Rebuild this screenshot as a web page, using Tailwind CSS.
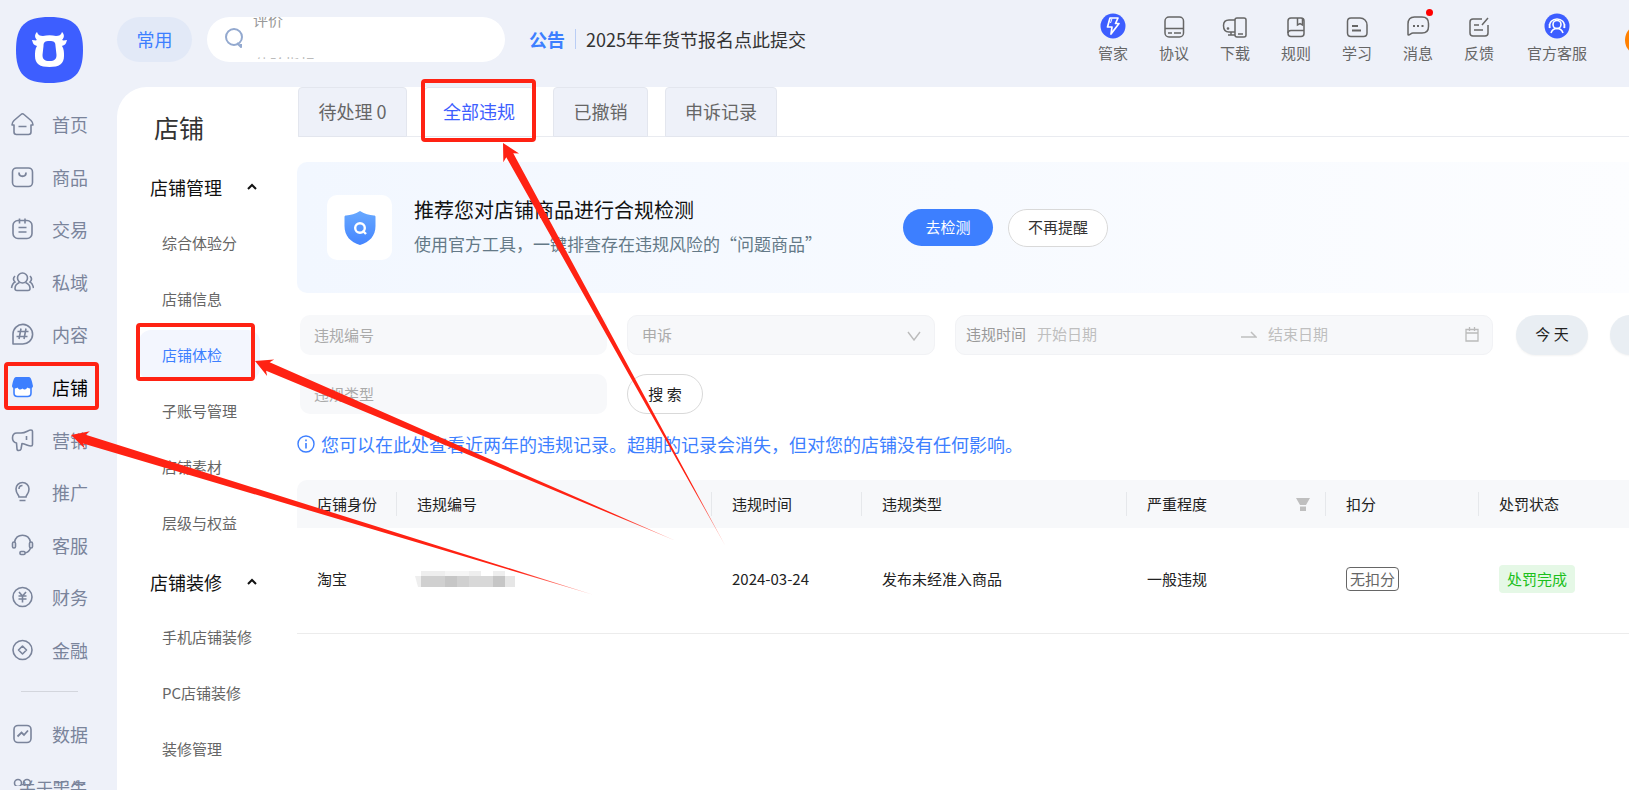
<!DOCTYPE html>
<html lang="zh-CN">
<head>
<meta charset="utf-8">
<meta name="viewport" content="width=device-width, initial-scale=1">
<title>店铺体检</title>
<script src="https://cdn.jsdelivr.net/npm/@tailwindcss/browser@4"></script>
</head>
<body class="relative flex h-screen flex-col overflow-hidden bg-[#eef1f9] font-['Noto_Sans_CJK_SC',sans-serif] text-[15px] leading-6 text-[#222]">

<header class="flex h-[87px] shrink-0 items-start overflow-hidden">
  <a href="#" aria-label="首页" class="ml-4 mt-[17px] shrink-0">
    <svg width="67" height="66" viewBox="0 0 67 66"><path d="M33.500 0C58 0 67 9 67 33S58 66 33.500 66 0 57 0 33 9 0 33.500 0Z" fill="#3d5eff"/><path fill="#fff" fill-rule="evenodd" d="M21 15c-3 3-2 6 0 8-2 1-3 0-5 0 1 4 2 5 5 6-2 3-2 6-2 10 0 8 5 11 14.500 11S48 47 48 39c0-4 0-7-2-10 3-1 4-2 5-6-2 0-3 1-5 0 2-2 3-5 0-8-1 3-3 4-6 4-4-1-9-1-13 0-3 0-5-1-6-4ZM33.500 24c4.500 0 6 1 6 5l1 9c0 4-2 6-7 6s-7-2-7-6l1-9c0-4 1.500-5 6-5Z"/></svg>
  </a>
  <button class="ml-[34px] mt-[17px] h-[45px] w-[75px] shrink-0 rounded-full bg-[#e2e9f7] pb-0.5 text-lg text-[#3d7fff]">常用</button>
  <label class="relative ml-[15px] mt-[17px] flex h-[45px] w-[298px] shrink-0 items-center overflow-hidden rounded-full bg-white pl-[18px]">
    <svg class="-mt-1" width="20" height="22" viewBox="0 0 20 22" fill="none" stroke="#93a9cf" stroke-width="2"><circle cx="9" cy="10" r="8"/><path d="M12 16l4 4v-3" stroke-linejoin="round"/></svg>
    <input aria-label="搜索" class="absolute inset-0 rounded-full bg-transparent pl-12 outline-none">
    <span class="pointer-events-none absolute -top-[9px] left-[46px] text-[#999]">评价</span>
    <span class="pointer-events-none absolute left-[48px] top-[39px] h-[3px] overflow-hidden text-[#bbb]"><span class="block leading-4">体验指标</span></span>
  </label>
  <div class="ml-6 mt-[23px] flex shrink-0 items-center whitespace-nowrap text-lg leading-8">
    <b class="text-[#3d7fff]">公告</b>
    <span class="mx-[10px] h-5 w-px bg-[#b9cdf5]"></span>
    <a href="#" class="text-[#333]">2025年年货节报名点此提交</a>
  </div>
  <nav class="ml-auto mt-[13px] flex shrink-0 gap-[31px] text-[#666]" aria-label="工具">
    <a href="#" class="flex flex-col items-center gap-0.5"><svg width="26" height="26" viewBox="0 0 26 26"><circle cx="13" cy="13" r="12.500" fill="#3d5eff"/><path d="M10 5h8l-2.500 5.500H19L11 21l1-7H7.500Z" fill="none" stroke="#fff" stroke-width="1.700" stroke-linejoin="round"/><path d="M12 5.500 10.500 10" stroke="#fff"/></svg>管家</a>
    <a href="#" class="flex flex-col items-center gap-0.5"><svg width="26" height="26" viewBox="0 0 26 26" fill="none" stroke="#666" stroke-width="1.500"><rect x="4" y="4" width="18.500" height="20" rx="4"/><path d="M4 15.500h18.500M7 20h4M13 20h7"/></svg>协议</a>
    <a href="#" class="flex flex-col items-center gap-0.5"><svg width="26" height="26" viewBox="0 0 26 26" fill="none" stroke="#666" stroke-width="1.500"><rect x="13" y="5" width="11" height="19" rx="2"/><path d="M13 7H7C3 7 1.500 9 1.500 12.500S3 19 7 19h6M9 19v3M6 22h7M16 21h5"/><circle cx="6" cy="15.500" r=".6" fill="#666"/></svg>下载</a>
    <a href="#" class="flex flex-col items-center gap-0.5"><svg width="26" height="26" viewBox="0 0 26 26" fill="none" stroke="#666" stroke-width="1.500"><rect x="5" y="5" width="16" height="18.500" rx="3"/><path d="M5 20c0-2 1-2.500 3-2.500h13M14.500 5v7l2.500-1.500 2.500 1.500V5"/></svg>规则</a>
    <a href="#" class="flex flex-col items-center gap-0.5"><svg width="26" height="26" viewBox="0 0 26 26" fill="none" stroke="#666" stroke-width="1.500"><path d="M7 5h9c4 0 7 3 7 7v8c0 2.500-1 3.500-3.500 3.500H7C4.500 23.500 3.500 22.500 3.500 20V8.500C3.500 6 4.500 5 7 5Z"/><path d="M8 13h6M8 17.500h9" stroke-width="1.800"/></svg>学习</a>
    <a href="#" class="relative flex flex-col items-center gap-0.5"><svg width="26" height="26" viewBox="0 0 26 26" fill="none" stroke="#666" stroke-width="1.500"><path d="M3 21.500V11c0-4.500 2-7 6.500-7H17c4.500 0 6.500 2.500 6.500 6.500v3c0 4-2 6.500-6.500 6.500H8c-2 0-3 2-4.500 2-.4 0-.5-.2-.5-.5Z"/><path d="M8 13h2M12 13h2M16.500 13h2" stroke-width="2"/></svg>消息<i class="absolute right-0 -top-1 size-[7px] rounded-full bg-[#ff0000]"></i></a>
    <a href="#" class="flex flex-col items-center gap-0.5"><svg width="26" height="26" viewBox="0 0 26 26" fill="none" stroke="#666" stroke-width="1.500"><path d="M16 6H7C5 6 4 7 4 9v11c0 2 1 3 3 3h12c2 0 3-1 3-3v-8M8 12h5M8 17h9M16 12l6-7"/></svg>反馈</a>
    <a href="#" class="ml-0.5 flex flex-col items-center gap-0.5"><svg width="26" height="26" viewBox="0 0 26 26" fill="none" stroke="#fff" stroke-width="1.600"><circle cx="13" cy="13" r="12.500" fill="#3d5eff" stroke="none"/><circle cx="13" cy="11.500" r="4"/><path d="M7 20c1-3 3-4.500 6-4.500s5 1.500 6 4.500M6 15c-3-12 17-12 14 0M5.500 11v4M20.500 11v4"/></svg>官方客服</a>
  </nav>
  <button aria-label="账户" class="-mr-7 ml-[38px] mt-6 size-8 shrink-0 rounded-full bg-[#ff8000]"></button>
</header>

<div class="flex min-h-0 flex-1">
  <nav class="relative w-[117px] shrink-0 overflow-hidden pt-[11px] text-lg text-[#7a849b]" aria-label="主导航">
    <div class="grid h-[578px] auto-rows-fr [&>a]:flex [&>a]:items-center [&>a]:gap-[18px] [&>a]:pl-[10px] [&_svg]:size-6 [&_svg]:shrink-0">
      <a href="#"><svg viewBox="0 0 24 24" fill="none" stroke="currentColor" stroke-width="1.600" stroke-linejoin="round"><path d="M4 13v7c0 1.500.5 2.500 2.500 2.500h12c2 0 2.500-1 2.500-2.500v-7h2c0-2-.5-3-2-4.500L14 2.500c-1-1-2-1-3 0L4 8.500C2.500 10 2 11 2 13ZM8.500 14.500h8"/></svg>首页</a>
      <a href="#"><svg viewBox="0 0 24 24" fill="none" stroke="currentColor" stroke-width="1.600"><rect x="2.500" y="3" width="20" height="18.500" rx="4"/><path d="M9 7.500c0 5 7 5 7 0" stroke-width="1.800"/></svg>商品</a>
      <a href="#"><svg viewBox="0 0 24 24" fill="none" stroke="currentColor" stroke-width="1.600"><rect x="3" y="3.500" width="19" height="18" rx="5"/><path d="M9.500 1.500v5M15 1.500v5M8.500 10.500h8M8.500 15h8"/></svg>交易</a>
      <a href="#"><svg viewBox="0 0 24 24" fill="none" stroke="currentColor" stroke-width="1.600"><circle cx="12.500" cy="8" r="5"/><path d="M9.500 12.500C7 13.500 5 16 5 18.500 5 20 6 20.500 7 20.500h11c1 0 2-.5 2-2 0-2.500-2-5-4.500-6M5 6C3 8 3 10 5 12c-2 1-3 3-3.500 6M20 6c2 2 2 4 0 6 2 1 3 3 3.500 6"/></svg>私域</a>
      <a href="#"><svg viewBox="0 0 24 24" fill="none" stroke="currentColor" stroke-width="1.600"><path d="M3 22V12A9.800 9.800 0 1 1 12.500 22Z" stroke-linejoin="round"/><path d="M11 6.500 9 17M16 6.500 14 17M7.500 9.500h11M6.500 14.500h11"/></svg>内容</a>
      <a href="#" aria-current="page" class="text-black"><svg viewBox="0 0 24 24"><path d="M4 13v5c0 2.500 1 3.500 3.500 3.500h10c2.500 0 3.500-1 3.500-3.500v-5" fill="#fff" stroke="#3d7fff" stroke-width="1.600"/><path d="M6 2h13c2 0 3 4 4 9 0 2-3 3.500-5.500 1.500-2 2.500-3.500 2.500-5 1-2 1.500-3.500 1.500-5-1C5 14.500 2 13 2 11 3 6 4 2 6 2Z" fill="#3d7fff"/></svg>店铺</a>
      <a href="#"><svg viewBox="0 0 24 24" fill="none" stroke="currentColor" stroke-width="1.600" stroke-linejoin="round"><path d="M7 5h4c5 0 7-3 10-3 1 0 1.500.5 1.500 1.500v13c0 1-.5 1.500-1.500 1.500-3 0-5-2-9-2.500l-1 5.500c-.5 2-4 2-4 0l-.5-6C4 14.500 2.500 13 2.500 10S4 5 7 5ZM16.500 8v4"/></svg>营销</a>
      <a href="#"><svg viewBox="0 0 24 24" fill="none" stroke="currentColor" stroke-width="1.600"><path d="M9 17c0-2-3-3-3-8a6.500 6.500 0 0 1 13 0c0 5-3 6-3 8ZM9.500 20.500h6M9 9c0-2 1.500-3.500 3.500-3.500"/></svg>推广</a>
      <a href="#"><svg viewBox="0 0 24 24" fill="none" stroke="currentColor" stroke-width="1.600"><path d="M4.500 9c2-9 14-9 16 0M20.500 15c-1 3-3 4.500-5.500 5"/><rect x="2.500" y="9" width="3" height="6" rx="1.500"/><rect x="19.500" y="9" width="3" height="6" rx="1.500"/><rect x="10" y="18.500" width="5" height="3" rx="1"/></svg>客服</a>
      <a href="#"><svg viewBox="0 0 24 24" fill="none" stroke="currentColor" stroke-width="1.600"><circle cx="12.500" cy="12" r="9.500"/><path d="M9 7l3.500 4L16 7M8.500 11h8M8.500 14h8M12.500 11v6.500"/></svg>财务</a>
      <a href="#"><svg viewBox="0 0 24 24" fill="none" stroke="currentColor" stroke-width="1.600"><circle cx="12.500" cy="12" r="9.500"/><path d="M12.500 8l4 4-4 4-4-4Z" stroke-linejoin="round"/></svg>金融</a>
    </div>
    <hr class="ml-[21px] mt-[15px] w-[57px] border-[#d3d6dd]">
    <a href="#" class="mt-4 flex h-[52px] items-center gap-[18px] pl-[10px]"><svg width="24" height="24" viewBox="0 0 24 24" fill="none" stroke="currentColor" stroke-width="1.600"><rect x="4" y="3.500" width="17" height="17" rx="4"/><path d="M7.500 14.500l4-4 2.500 2.500 4-4.500" stroke-width="1.800"/></svg>数据</a>
    <a href="#" class="mt-[18px] flex h-2 items-start gap-[18px] overflow-hidden pl-[10px]"><svg width="24" height="24" viewBox="0 0 24 24" fill="none" stroke="currentColor" stroke-width="1.600"><circle cx="8" cy="5" r="3.500"/><circle cx="17" cy="5" r="3.500"/></svg><span class="leading-5">服务</span></a>
    <a href="#" class="absolute left-[19px] top-[688px] text-[17px]">关于千牛</a>
  </nav>

  <div class="flex min-w-0 flex-1 overflow-hidden rounded-tl-[30px] bg-white">
    <aside class="w-[180px] shrink-0 text-[#666]">
      <h1 class="ml-[37px] mt-[22px] text-[25px] leading-9 text-[#333]">店铺</h1>
      <button class="mt-[14px] flex h-14 w-full items-center pl-[33px] text-lg text-[#111]">店铺管理<svg class="ml-6" width="12" height="8" viewBox="0 0 12 8" fill="none" stroke="#111" stroke-width="2"><path d="M2 6l4-4 4 4"/></svg></button>
      <nav class="[&>a]:flex [&>a]:h-14 [&>a]:items-center [&>a]:pl-[45px]" aria-label="店铺管理">
        <a href="#">综合体验分</a>
        <a href="#">店铺信息</a>
        <a href="#" aria-current="page" class="text-[#3d7fff]"><span class="-ml-[23px] flex h-[50px] w-[121px] items-center rounded-xl bg-[#f3f6fe] pl-[23px]">店铺体检</span></a>
        <a href="#">子账号管理</a>
        <a href="#">店铺素材</a>
        <a href="#">层级与权益</a>
      </nav>
      <button class="flex h-[58px] w-full items-center pl-[33px] pt-1 text-lg text-[#111]">店铺装修<svg class="ml-6" width="12" height="8" viewBox="0 0 12 8" fill="none" stroke="#111" stroke-width="2"><path d="M2 6l4-4 4 4"/></svg></button>
      <nav class="[&>a]:flex [&>a]:h-14 [&>a]:items-center [&>a]:pl-[45px]" aria-label="店铺装修">
        <a href="#">手机店铺装修</a>
        <a href="#">PC店铺装修</a>
        <a href="#">装修管理</a>
      </nav>
    </aside>

    <main class="min-w-0 flex-1 overflow-hidden">
      <div role="tablist" class="ml-px flex h-[50px] gap-[17px] border-b border-[#e9ebf0] text-lg text-[#666] [&>button]:-mb-px [&>button]:rounded-t-sm [&>button]:border [&>button]:border-[#e3e6ee] [&>button]:px-[18px] [&>button]:pb-[3px]">
        <button role="tab" class="w-[109px] bg-[#eef1f9]">待处理 0</button>
        <button role="tab" aria-selected="true" class="bg-white text-[#3d5eff]">全部违规</button>
        <button role="tab" class="ml-0.5 w-[95px] bg-[#eef1f9]">已撤销</button>
        <button role="tab" class="w-[112px] bg-[#eef1f9]">申诉记录</button>
      </div>

      <section class="mt-[25px] flex h-[131px] items-center rounded-l-[10px] bg-linear-to-r from-[#f2f7ff] to-[#fcfdff] pl-[30px]">
        <div class="flex size-[65px] shrink-0 items-center justify-center rounded-[10px] bg-white">
          <svg width="32" height="36" viewBox="0 0 32 36"><defs><linearGradient id="shield" x2="0" y2="1"><stop stop-color="#67a8ff"/><stop offset="1" stop-color="#4485ff"/></linearGradient></defs><path d="M16 1c5 3 9 4 14 4.500 1 0 1.500.5 1.500 1.500v9c0 10-6 16-15.500 19C6.500 32 .5 26 .5 16V7C.5 6 1 5.500 2 5.500 7 5 11 4 16 1Z" fill="url(#shield)"/><circle cx="16" cy="18" r="4.800" fill="none" stroke="#fff" stroke-width="2.400"/><path d="M18.500 20.500l3.500 3.500" stroke="#fff" stroke-width="2.400"/></svg>
        </div>
        <div class="ml-[22px] w-[489px] shrink-0 whitespace-nowrap pb-1">
          <h2 class="text-xl leading-9 text-[#111]">推荐您对店铺商品进行合规检测</h2>
          <p class="text-[17px] leading-8 text-[#647987]">使用官方工具，一键排查存在违规风险的“问题商品”</p>
        </div>
        <button class="h-[37px] w-[90px] shrink-0 rounded-full bg-[#3d7fff] pb-0.5 text-white">去检测</button>
        <button class="ml-[15px] h-[38px] w-[100px] shrink-0 rounded-full border border-[#d9d9d9] bg-white pb-0.5 text-[#333]">不再提醒</button>
      </section>

      <form class="ml-[3px] mt-[22px] grid grid-cols-[307px_308px_538px_72px_90px] gap-x-5 gap-y-[19px]" onsubmit="return false">
        <input aria-label="违规编号" placeholder="违规编号" class="h-10 w-full rounded-[10px] bg-[#f7f8fa] px-[14px] pb-0.5 outline-none placeholder:text-[#aaa]">
        <div class="relative">
          <select aria-label="申诉" class="h-10 w-full appearance-none rounded-[10px] border border-[#f1f2f5] bg-[#f7f8fa] px-[14px] text-[#aaa]"><option>申诉</option></select>
          <svg class="pointer-events-none absolute right-[14px] top-4" width="14" height="10" viewBox="0 0 14 10" fill="none" stroke="#bbb" stroke-width="1.400"><path d="M1 1l6 8 6-8"/></svg>
        </div>
        <div class="flex h-10 items-center rounded-[10px] border border-[#f1f2f5] bg-[#f7f8fa] px-[10px] pb-0.5">
          <label for="start" class="shrink-0 text-[#999]">违规时间</label>
          <input id="start" placeholder="开始日期" class="ml-[11px] w-[204px] outline-none placeholder:text-[#bfbfbf]">
          <svg width="16" height="8" viewBox="0 0 16 8" fill="none" stroke="#bfbfbf" stroke-width="1.500"><path d="M0 7h15L10 2"/></svg>
          <input aria-label="结束日期" placeholder="结束日期" class="ml-[11px] w-0 flex-1 outline-none placeholder:text-[#bfbfbf]">
          <svg class="mr-[3px]" width="14" height="15" viewBox="0 0 14 15" fill="none" stroke="#bbb" stroke-width="1.300"><path d="M1 2.500h12V14H1ZM1 6h12M4.500 0v4M9.500 0v4"/></svg>
        </div>
        <button class="ml-[3px] h-10 w-[72px] rounded-full bg-[#e9eef3] pb-0.5 shadow-xs">今 天</button>
        <button aria-label="更多日期" class="ml-[5px] h-10 w-[90px] rounded-full bg-[#e9eef3] shadow-xs"></button>
        <input aria-label="违规类型" placeholder="违规类型" class="h-10 w-full rounded-[10px] bg-[#f7f8fa] px-[14px] pb-0.5 outline-none placeholder:text-[#aaa]">
        <button class="h-10 w-[76px] rounded-full border border-[#d9d9d9] bg-white">搜 索</button>
      </form>

      <p class="mt-[14px] flex items-center gap-[6px] whitespace-nowrap text-lg leading-8 text-[#3d7fff]">
        <svg width="18" height="18" viewBox="0 0 18 18" fill="none" stroke="#3d7fff" stroke-width="1.400"><circle cx="9" cy="9" r="8"/><path d="M9 8v5.500M9 4.500v1.800" stroke-width="1.600"/></svg>
        您可以在此处查看近两年的违规记录。超期的记录会消失，但对您的店铺没有任何影响。
      </p>

      <table class="mt-5 w-full table-fixed text-left">
        <colgroup><col class="w-[100px]"><col class="w-[315px]"><col class="w-[150px]"><col class="w-[265px]"><col class="w-[199px]"><col class="w-[153px]"><col></colgroup>
        <thead>
          <tr class="h-12 bg-[#f7f8fa] [&>th]:p-0 [&>th]:font-normal [&_span]:flex [&_span]:h-6 [&_span]:items-center [&_span]:border-r [&_span]:border-[#e6e8eb] [&_span]:pl-5">
            <th class="rounded-tl-[10px]"><span>店铺身份</span></th>
            <th><span>违规编号</span></th>
            <th><span>违规时间</span></th>
            <th><span>违规类型</span></th>
            <th><span>严重程度<button aria-label="筛选" class="ml-auto mr-[15px]"><svg width="14" height="13" viewBox="0 0 14 13" fill="#bfbfbf"><path d="M0 0h14l-4 7H4ZM4 8.500h6V13H4Z"/></svg></button></span></th>
            <th><span>扣分</span></th>
            <th><span class="border-r-0!">处罚状态</span></th>
          </tr>
        </thead>
        <tbody>
          <tr class="h-[105px] border-b border-[#ececec] [&>td]:p-0 [&>td]:pb-0.5 [&>td]:pl-5">
            <td>淘宝</td>
            <td><svg class="-ml-0.5" width="100" height="16" viewBox="0 0 100 16" role="img" aria-label="已隐藏"><path fill="#eee" d="M6 0h24v5H6ZM54 0h12v5H54ZM78 0h12v5H78ZM0 5h6v11H3Z"/><path fill="#f5f5f5" d="M30 0h24v5H30Z"/><path fill="#d0d0d0" d="M6 5h24v11H6ZM42 5h12v11H42Z"/><path fill="#c6c6c6" d="M30 5h12v11H30ZM78 5h12v11H78Z"/><path fill="#d8d8d8" d="M54 5h24v11H54Z"/><path fill="#e6e6e6" d="M90 5h10v11H90Z"/></svg></td>
            <td>2024-03-24</td>
            <td>发布未经准入商品</td>
            <td>一般违规</td>
            <td><span class="inline-block rounded-sm border border-[#666] px-[3px] leading-[22px] text-[#666]">无扣分</span></td>
            <td><span class="inline-block rounded-sm bg-[#e5f8e6] px-2 leading-7 text-[#1cc01c]">处罚完成</span></td>
          </tr>
        </tbody>
      </table>
    </main>
  </div>
</div>

<!-- Guide marks laid over the page -->
<svg class="pointer-events-none absolute left-0 top-0" width="800" height="640" viewBox="0 0 800 640" aria-hidden="true">
  <defs>
    <linearGradient id="fade" gradientUnits="userSpaceOnUse" x1="0" x2="546" y1="0" y2="0"><stop offset=".85" stop-color="#ff2213"/><stop offset="1" stop-color="#ff2213" stop-opacity=".4"/></linearGradient>
    <linearGradient id="fade2" gradientUnits="userSpaceOnUse" x1="0" x2="460" y1="0" y2="0"><stop offset=".85" stop-color="#ff2213"/><stop offset="1" stop-color="#ff2213" stop-opacity=".4"/></linearGradient>
  </defs>
  <g fill="none" stroke="#ff2213" stroke-width="4">
    <rect x="6" y="364" width="91" height="44" rx="2"/>
    <rect x="138" y="325" width="115" height="54" rx="2"/>
    <rect x="423" y="81" width="111" height="59" rx="2"/>
  </g>
  <path transform="translate(503 143) rotate(61.100)" fill="url(#fade2)" d="M0 0 17-9 14-4 460 0 14 4 17 9Z"/>
  <path transform="translate(255 361) rotate(23.150)" fill="url(#fade2)" d="M0 0 17-9 14-4.500 458 0 14 4.500 17 9Z"/>
  <path transform="translate(71 435) rotate(17)" fill="url(#fade)" d="M0 0 17-9 14-4.500 546 0 14 4.500 17 9Z"/>
</svg>
</body>
</html>
